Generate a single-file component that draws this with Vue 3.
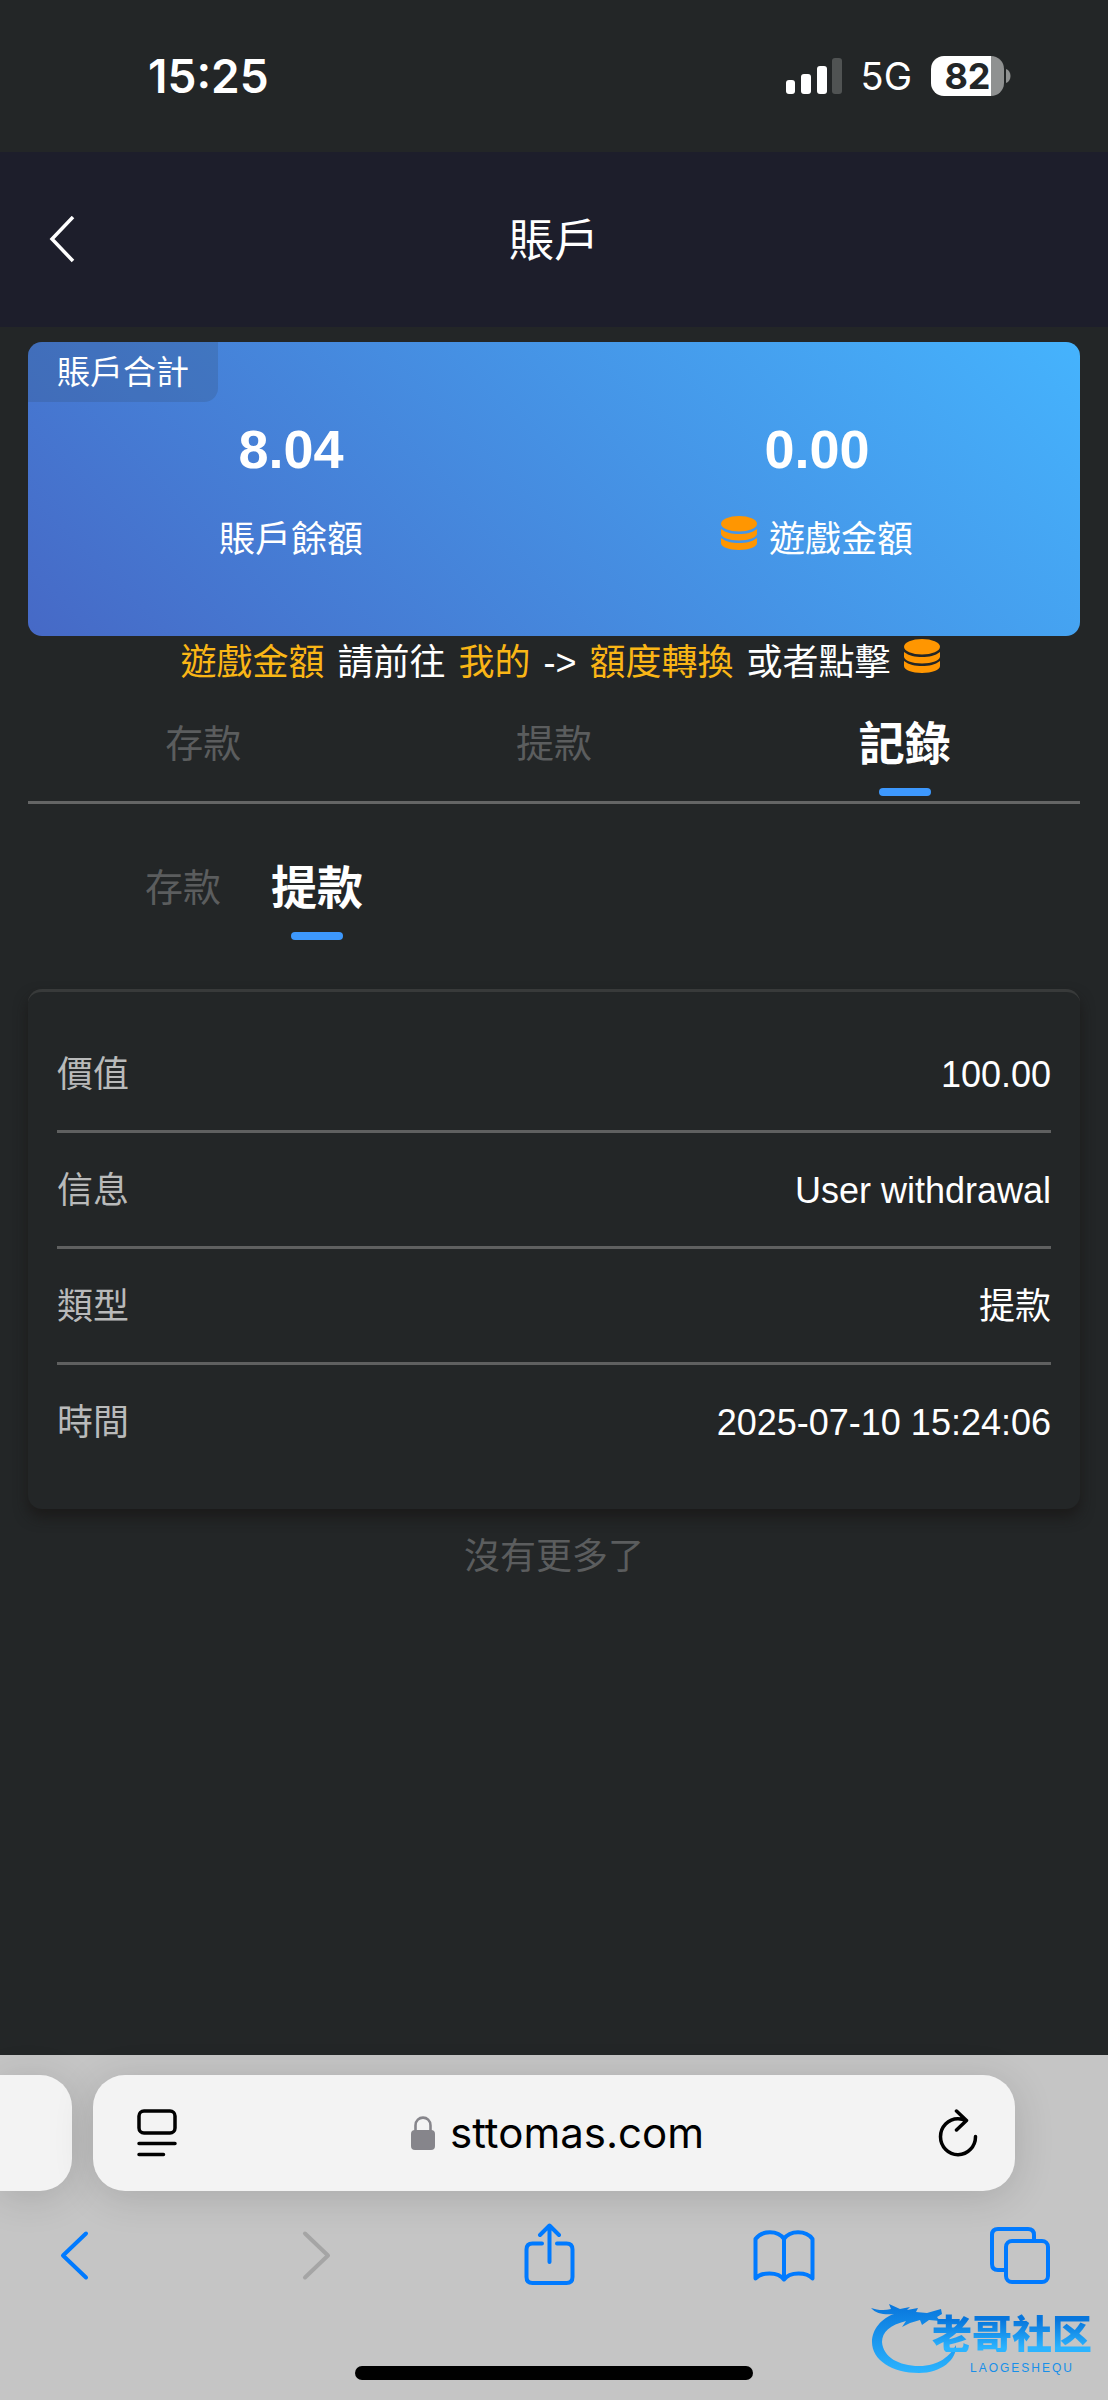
<script setup>
const balances = [
  { label: '賬戶餘額', value: '8.04', coins: false },
  { label: '遊戲金額', value: '0.00', coins: true },
]
const mainTabs = [
  { label: '存款', active: false },
  { label: '提款', active: false },
  { label: '記錄', active: true },
]
const subTabs = [
  { label: '存款', active: false },
  { label: '提款', active: true },
]
const record = [
  { label: '價值', value: '100.00' },
  { label: '信息', value: 'User withdrawal' },
  { label: '類型', value: '提款' },
  { label: '時間', value: '2025-07-10 15:24:06' },
]
</script>

<template>
  <div class="screen">
    <svg class="defs" width="0" height="0" aria-hidden="true">
      <symbol id="coins" viewBox="0 0 36 34">
        <ellipse cx="18" cy="7.7" rx="18" ry="7.7" />
        <path d="M0 13C5 17 11 18 18 18S31 17 36 13V17.500C36 21.500 28 24.500 18 24.500S0 21.500 0 17.500Z" />
        <path d="M0 22C5 26 11 27 18 27S31 26 36 22V27C36 31 28 34 18 34S0 31 0 27Z" />
      </symbol>
    </svg>

    <div class="status">
      <time class="clock">15:25</time>
      <div class="indicators">
        <svg class="signal" width="56" height="36" viewBox="0 0 56 36" fill="#fff" aria-hidden="true">
          <rect x="0" y="22" width="9" height="14" rx="3" />
          <rect x="15" y="16" width="10" height="20" rx="3" />
          <rect x="31" y="8" width="10" height="28" rx="3" />
          <rect x="46" y="0" width="10" height="36" rx="3" fill="#505353" />
        </svg>
        <span class="network">5G</span>
        <div class="battery">
          <span class="level">82</span>
          <svg class="nub" width="5" height="14" viewBox="0 0 5 14" fill="#8f9191" aria-hidden="true"><path d="M0 0C6 2 6 12 0 14Z" /></svg>
        </div>
      </div>
    </div>

    <header class="header">
      <button class="back" aria-label="返回">
        <svg width="28" height="48" viewBox="0 0 28 48" fill="none" stroke="#fff" stroke-width="3.5"><path d="M25 1L4 23L25 45" /></svg>
      </button>
      <h1>賬戶</h1>
    </header>

    <main class="content">
      <section class="summary">
        <h2 class="tag">賬戶合計</h2>
        <div v-for="b in balances" :key="b.label" class="balance">
          <strong>{{ b.value }}</strong>
          <span class="caption">
            <svg v-if="b.coins" class="coins" aria-hidden="true"><use href="#coins" /></svg>
            {{ b.label }}
          </span>
        </div>
      </section>

      <p class="tip">
        <em>遊戲金額</em><span>請前往</span><em>我的</em><span>-&gt;</span><em>額度轉換</em><span>或者點擊</span>
        <button class="convert" aria-label="額度轉換"><svg class="coins" aria-hidden="true"><use href="#coins" /></svg></button>
      </p>

      <nav class="tabs main-tabs">
        <button v-for="t in mainTabs" :key="t.label" class="tab" :class="{ active: t.active }">{{ t.label }}</button>
      </nav>
      <nav class="tabs sub-tabs">
        <button v-for="t in subTabs" :key="t.label" class="tab" :class="{ active: t.active }">{{ t.label }}</button>
      </nav>

      <dl class="record">
        <div v-for="r in record" :key="r.label" class="row">
          <dt>{{ r.label }}</dt>
          <dd>{{ r.value }}</dd>
        </div>
      </dl>
      <p class="end">沒有更多了</p>
    </main>

    <footer class="browser">
      <div class="address-row">
        <div class="page-tab previous"></div>
        <div class="page-tab current">
          <button aria-label="頁面選單">
            <svg width="40" height="48" viewBox="0 0 40 48" fill="none" stroke="#000" stroke-width="3.5" stroke-linecap="round"><rect x="2" y="2" width="36" height="22" rx="5" /><path d="M2 34.500H38M2 45.500H26.500" /></svg>
          </button>
          <div class="url">
            <svg width="24" height="34" viewBox="0 0 24 34" aria-hidden="true"><rect y="14" width="24" height="20" rx="4" fill="#86858b" /><path d="M4.500 16V9.500C4.500 -1 19.500 -1 19.500 9.500V16" fill="none" stroke="#86858b" stroke-width="2.600" /></svg>
            <span>sttomas.com</span>
          </div>
          <button aria-label="重新載入">
            <svg width="40" height="48" viewBox="0 0 40 48" fill="none" stroke="#000" stroke-width="3.500" stroke-linecap="round" stroke-linejoin="round"><path d="M28 11.500C25 10 22.500 9.700 20 9.700A17.500 18 0 1 0 37.500 27.500M18.500 2L28.500 11.500L18.500 21" /></svg>
          </button>
        </div>
      </div>
      <nav class="toolbar">
        <button aria-label="上一頁"><svg width="62" height="64" viewBox="0 0 62 64"><path d="M42 10.500L19 32.500L42 54.500" /></svg></button>
        <button aria-label="下一頁" disabled><svg width="62" height="64" viewBox="0 0 62 64"><path d="M25 10.500L48 32.500L25 54.500" /></svg></button>
        <button aria-label="分享"><svg width="62" height="64" viewBox="0 0 62 64"><path d="M25 20.500H15.500Q9.500 20.500 9.500 26.500V54Q9.500 60 15.500 60H49.500Q55.500 60 55.500 54V26.500Q55.500 20.500 49.500 20.500H40M32.500 39V3M23 12L32.500 2.500L42 12" /></svg></button>
        <button aria-label="書籤"><svg width="62" height="64" viewBox="0 0 62 64"><path d="M31 16C25 7 9 7 2.500 16V55.500C8 49 25 48 31 56.500C37 48 54 49 59.500 55.500V16C53 7 37 7 31 16V56" /></svg></button>
        <button aria-label="分頁"><svg width="62" height="64" viewBox="0 0 62 64"><rect x="17" y="18" width="42" height="41" rx="6" /><path d="M45 17V12Q45 6 39 6H9Q3 6 3 12V41Q3 47 9 47H16" /></svg></button>
      </nav>
      <div class="home-bar"></div>
      <div class="watermark">
        <svg width="90" height="76" viewBox="0 0 90 76" aria-hidden="true">
          <defs>
            <linearGradient id="azure" x1="0" y1="0" x2="0" y2="1"><stop offset="0" stop-color="#0876dc" /><stop offset="1" stop-color="#2bb4ff" /></linearGradient>
          </defs>
          <path fill="url(#azure)" d="M1 10C7 12 14 13 21 11L19 6L30 11L40 9L37 12L48 10L46 14L57 15L71 11L72 16L67 19L70 23L59 22L52 27L50 22L40 25L32 29L36 23C20 27 12 34 12 44C13 59 29 68 49 68C69 68 80 58 86 47C87 62 71 75 49 75C22 75 2 62 2 44C2 31 12 20 24 16C15 17 6 16 1 10Z" />
        </svg>
        <span class="brand">老哥社区</span>
        <span class="latin">LAOGESHEQU</span>
      </div>
    </footer>
  </div>
</template>

<style>
body {
  margin: 0;
  background: #232627;
}
</style>

<style scoped>
.screen {
  display: flex;
  flex-direction: column;
  min-height: 100vh;
  background: #232627;
  color: #fff;
  font-family: "Liberation Sans", "Noto Sans CJK TC", sans-serif;
  font-size: 36px;
  line-height: 48px;
}
.defs { position: absolute; }
h1, h2, p, dl, dd { margin: 0; font-weight: 400; }
em { font-style: normal; }
button {
  display: flex;
  padding: 0;
  border: 0;
  background: none;
  color: inherit;
  font: inherit;
}
.coins { width: 36px; height: 34px; fill: #ff9601; }

.status {
  display: flex;
  justify-content: space-between;
  align-items: center;
  height: 152px;
  padding: 0 97px 0 148px;
  font-family: Inter, sans-serif;
}
.clock { font-size: 46px; font-weight: 600; }
.indicators { display: flex; align-items: center; }
.network { margin: 0 19px; font-size: 38px; }
.battery {
  display: flex;
  align-items: center;
  gap: 2px;
}
.level {
  width: 73px;
  border-radius: 13px;
  background: linear-gradient(90deg, #fff 60px, #8f9191 60px);
  color: #232627;
  font-size: 36px;
  font-weight: 700;
  line-height: 40px;
  text-align: center;
}

.header {
  display: grid;
  grid-template-columns: 1fr auto 1fr;
  align-items: center;
  height: 175px;
  padding: 0 48px;
  background: #1d1e2b;
}
.header h1 { padding-top: 4px; font-size: 45px; }

.content { flex: 1; padding: 15px 28px 0; }
.summary {
  position: relative;
  display: flex;
  height: 294px;
  border-radius: 14px;
  overflow: hidden;
  background: linear-gradient(45deg, #4669c6, #45b3fd);
}
.tag {
  position: absolute;
  top: 0;
  left: 0;
  padding: 7px 29px 5px;
  border-radius: 0 0 14px 0;
  background: rgba(50, 80, 120, 0.25);
  font-size: 33px;
}
.balance {
  flex: 1;
  display: flex;
  flex-direction: column;
  align-items: center;
  gap: 40px;
  padding-top: 80px;
}
.balance strong { font-size: 54px; line-height: 54px; }
.caption { display: flex; gap: 12px; }

.tip {
  display: flex;
  justify-content: center;
  gap: 13px;
  padding: 3px 0 0 12px;
}
.tip em { color: #fab616; }

.tabs { display: flex; }
.tab {
  flex-direction: column;
  align-items: center;
  color: #5b5d5e;
  font-size: 38px;
  line-height: 60px;
}
.tab.active { color: #fff; font-size: 46px; font-weight: 700; }
.tab.active::after {
  content: "";
  width: 52px;
  height: 8px;
  margin-top: 14px;
  border-radius: 4px;
  background: #3d98fd;
}
.main-tabs {
  height: 87px;
  padding-top: 27px;
  border-bottom: 3px solid #646565;
}
.main-tabs .tab { flex: 1; }
.sub-tabs {
  gap: 50px;
  padding: 54px 117px 49px;
}

.record {
  padding: 25px 29px 28px;
  border-top: 3px solid #383a3a;
  border-radius: 14px;
  box-shadow: 0 8px 14px rgba(24, 22, 20, 0.7);
}
.row {
  display: flex;
  justify-content: space-between;
  align-items: center;
  height: 110px;
  padding-top: 3px;
  border-bottom: 3px solid #5f6060;
}
.row:last-child { border-color: transparent; }
dt { color: #b9baba; }
.end {
  padding-top: 24px;
  color: #5b5d5e;
  text-align: center;
}

.browser {
  position: relative;
  display: flex;
  flex-direction: column;
  padding-bottom: 20px;
  background: #c5c5c5;
}
.address-row {
  display: flex;
  gap: 21px;
  padding: 20px 93px 0 0;
}
.page-tab {
  height: 116px;
  border-radius: 32px;
  background: #f3f3f3;
  box-shadow: 0 6px 40px rgba(0, 0, 0, 0.14);
}
.previous { width: 72px; border-radius: 0 32px 32px 0; }
.current {
  flex: 1;
  display: flex;
  justify-content: space-between;
  align-items: center;
  padding: 0 37px 0 44px;
  color: #000;
}
.url {
  display: flex;
  align-items: center;
  gap: 15px;
  font-family: Inter, sans-serif;
  font-size: 42px;
}
.toolbar {
  display: flex;
  justify-content: space-between;
  padding: 32px 57px 79px 44px;
  fill: none;
  stroke: #007aff;
  stroke-width: 4;
  stroke-linecap: round;
  stroke-linejoin: round;
}
.toolbar button:disabled { stroke: #a5a5a5; }
.home-bar {
  align-self: center;
  width: 36%;
  height: 14px;
  border-radius: 7px;
  background: #000;
}
.watermark {
  position: absolute;
  right: 16px;
  bottom: 26px;
  width: 222px;
  height: 76px;
  color: #178fe9;
}
.brand {
  position: absolute;
  right: 0;
  top: 14px;
  background: linear-gradient(#0876dc 20%, #2bb4ff 90%);
  background-clip: text;
  color: transparent;
  font-family: "Noto Sans CJK SC", sans-serif;
  font-size: 40px;
  font-weight: 900;
  line-height: 40px;
}
.latin {
  position: absolute;
  right: 18px;
  bottom: 0;
  font-size: 12px;
  letter-spacing: 2px;
  line-height: 12px;
}
</style>
